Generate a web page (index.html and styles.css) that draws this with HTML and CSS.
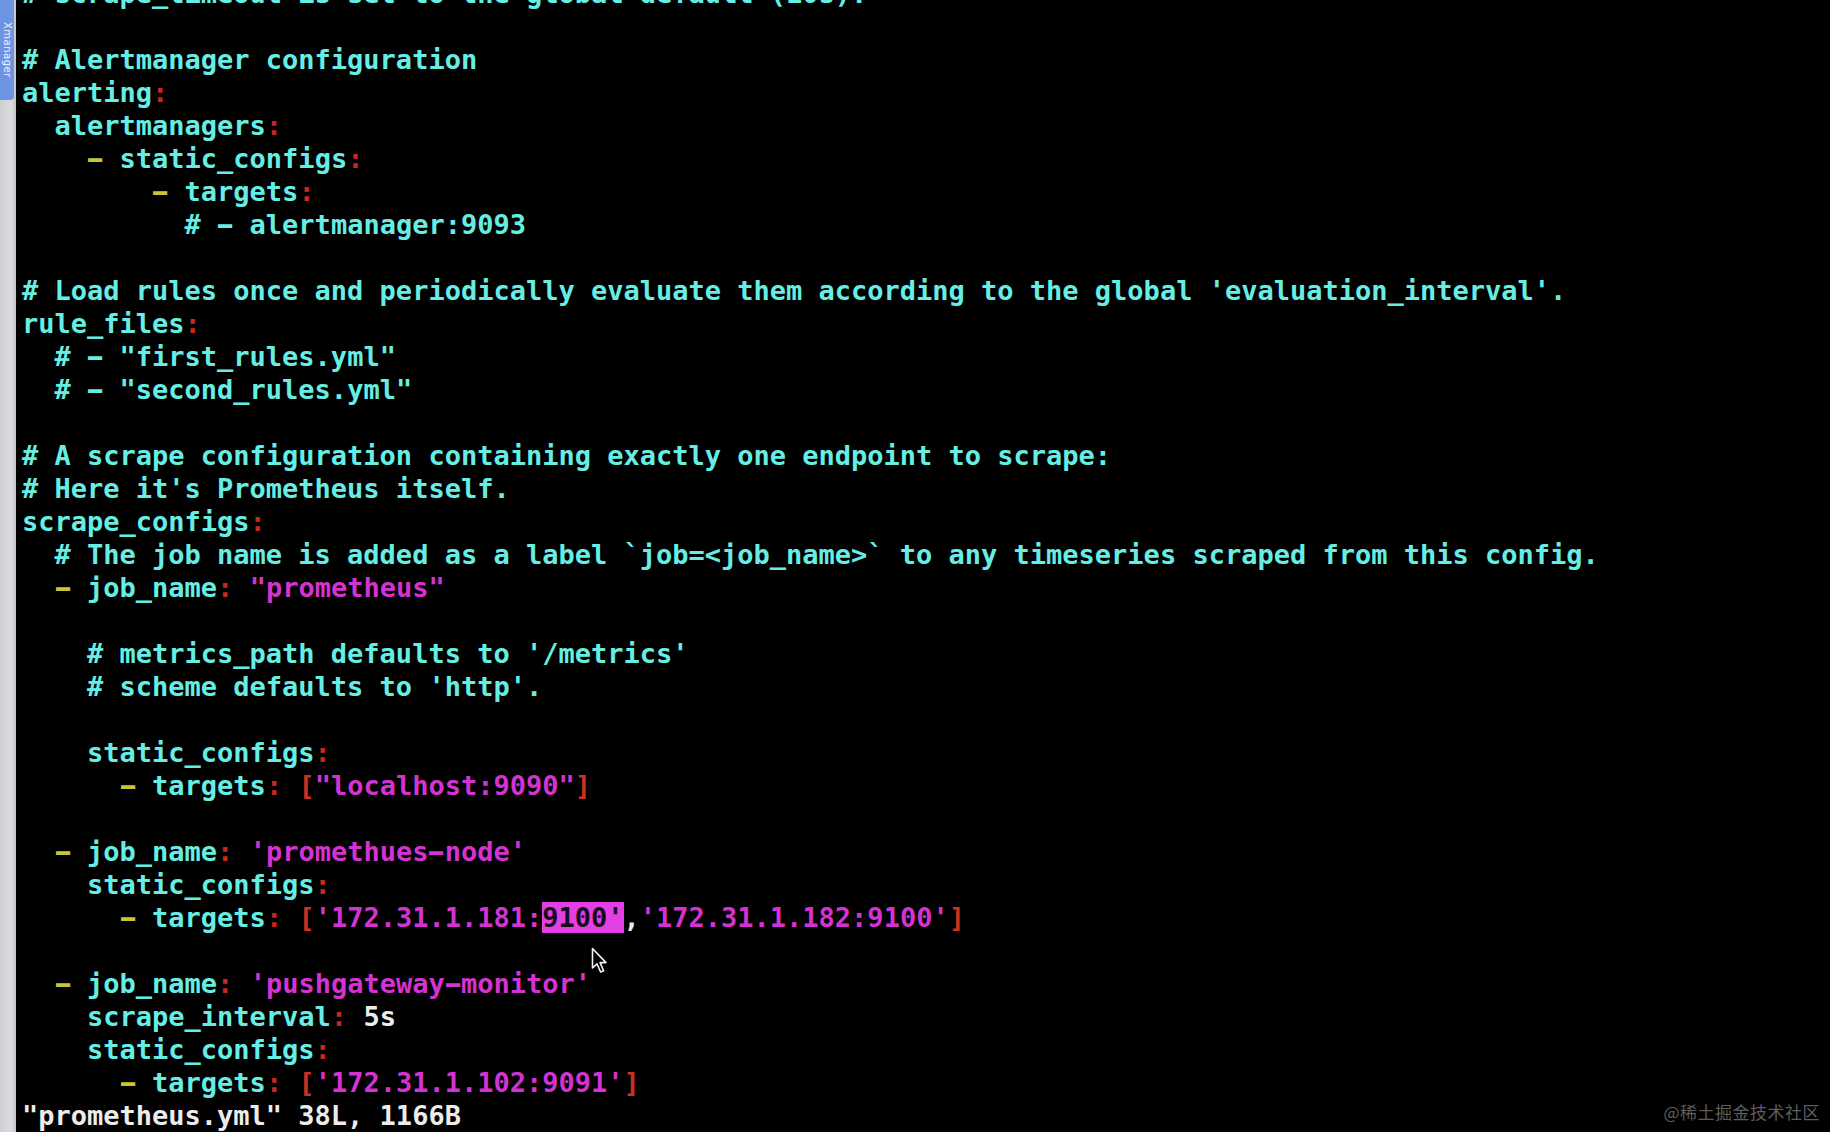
FILE: index.html
```html
<!DOCTYPE html>
<html lang="en">
<head>
<meta charset="utf-8">
<title>prometheus.yml - vim</title>
<link rel="stylesheet" href="styles.css">
</head>
<body>
<div class="screen">
  <aside class="gutter">
    <div class="tab"><span class="tab-label">Xmanager</span></div>
  </aside>
  <main class="term">
<pre class="code"><span class="k"># scrape_timeout is set to the global default (10s).</span>

<span class="k"># Alertmanager configuration</span>
<span class="k">alerting</span><span class="c">:</span>
<span class="k">  alertmanagers</span><span class="c">:</span>
    <span class="d hy">-</span> <span class="k">static_configs</span><span class="c">:</span>
        <span class="d hy">-</span> <span class="k">targets</span><span class="c">:</span>
<span class="k">          # <span class="hy">-</span> alertmanager:9093</span>

<span class="k"># Load rules once and periodically evaluate them according to the global 'evaluation_interval'.</span>
<span class="k">rule_files</span><span class="c">:</span>
<span class="k">  # <span class="hy">-</span> "first_rules.yml"</span>
<span class="k">  # <span class="hy">-</span> "second_rules.yml"</span>

<span class="k"># A scrape configuration containing exactly one endpoint to scrape:</span>
<span class="k"># Here it's Prometheus itself.</span>
<span class="k">scrape_configs</span><span class="c">:</span>
<span class="k">  # The job name is added as a label `job=&lt;job_name&gt;` to any timeseries scraped from this config.</span>
  <span class="d hy">-</span> <span class="k">job_name</span><span class="c">:</span> <span class="s">"prometheus"</span>

<span class="k">    # metrics_path defaults to '/metrics'</span>
<span class="k">    # scheme defaults to 'http'.</span>

<span class="k">    static_configs</span><span class="c">:</span>
      <span class="d hy">-</span> <span class="k">targets</span><span class="c">:</span> <span class="b">[</span><span class="s">"localhost:9090"</span><span class="b">]</span>

  <span class="d hy">-</span> <span class="k">job_name</span><span class="c">:</span> <span class="s">'promethues<span class="hy">-</span>node'</span>
<span class="k">    static_configs</span><span class="c">:</span>
      <span class="d hy">-</span> <span class="k">targets</span><span class="c">:</span> <span class="b">[</span><span class="s">'172.31.1.181:</span><span class="hl">9100'</span><span class="w">,</span><span class="s">'172.31.1.182:9100'</span><span class="b">]</span>

  <span class="d hy">-</span> <span class="k">job_name</span><span class="c">:</span> <span class="s">'pushgateway<span class="hy">-</span>monitor'</span>
<span class="k">    scrape_interval</span><span class="c">:</span> <span class="w">5s</span>
<span class="k">    static_configs</span><span class="c">:</span>
      <span class="d hy">-</span> <span class="k">targets</span><span class="c">:</span> <span class="b">[</span><span class="s">'172.31.1.102:9091'</span><span class="b">]</span>
<span class="w">"prometheus.yml" 38L, 1166B</span></pre>
  </main>
</div>
<svg class="cursor" width="18" height="28" viewBox="0 0 18 28" aria-hidden="true">
  <path d="M1.5 1.5 L1.5 21 L6 16.8 L9.6 25 L12.6 23.7 L9.1 15.6 L15 15.6 Z" fill="#000" stroke="#f2f2f2" stroke-width="1.6" stroke-linejoin="round"/>
</svg>
<div class="watermark">@稀土掘金技术社区</div>
</body>
</html>
```

FILE: styles.css
```css
html, body {
  margin: 0;
  padding: 0;
  background: #000;
  height: 100%;
  overflow: hidden;
}

.screen {
  display: flex;
  height: 1132px;
  width: 1830px;
}

.gutter {
  width: 16px;
  flex: 0 0 16px;
  background: linear-gradient(to right, #cfcfd3, #dcdcdf 70%, #c4c4c8);
  display: flex;
  flex-direction: column;
}

.tab {
  width: 14px;
  height: 100px;
  background: #6c93e4;
  border-bottom-right-radius: 4px;
  display: flex;
  align-items: center;
  justify-content: center;
  overflow: hidden;
}

.tab-label {
  writing-mode: vertical-rl;
  font-family: "DejaVu Sans", sans-serif;
  font-size: 10px;
  color: #eef3ff;
  letter-spacing: 0.5px;
}

.term {
  flex: 1;
  background: #000;
  padding-left: 6px;
  overflow: hidden;
}

.code {
  margin: -23px 0 0 0;
  font-family: "DejaVu Sans Mono", "Liberation Mono", monospace;
  font-weight: bold;
  font-size: 27px;
  line-height: 33px;
  color: #66eee4;
  white-space: pre;
}

.k { color: #66eee4; }
.c { color: #c8281e; }
.d { color: #c9c53a; }
.s { color: #d433d2; }
.b { color: #d0301f; }
.w { color: #ececec; }
.hl {
  background: #e240e2;
  color: #1a0a1a;
}

.hy {
  display: inline-block;
  transform: scaleX(1.7);
}

.cursor {
  position: absolute;
  left: 591px;
  top: 947px;
}

.watermark {
  position: absolute;
  right: 10px;
  bottom: 8px;
  font-family: "Noto Sans CJK SC", "Noto Sans", sans-serif;
  font-size: 17px;
  color: #5e5e5e;
  letter-spacing: 0.5px;
}
```
